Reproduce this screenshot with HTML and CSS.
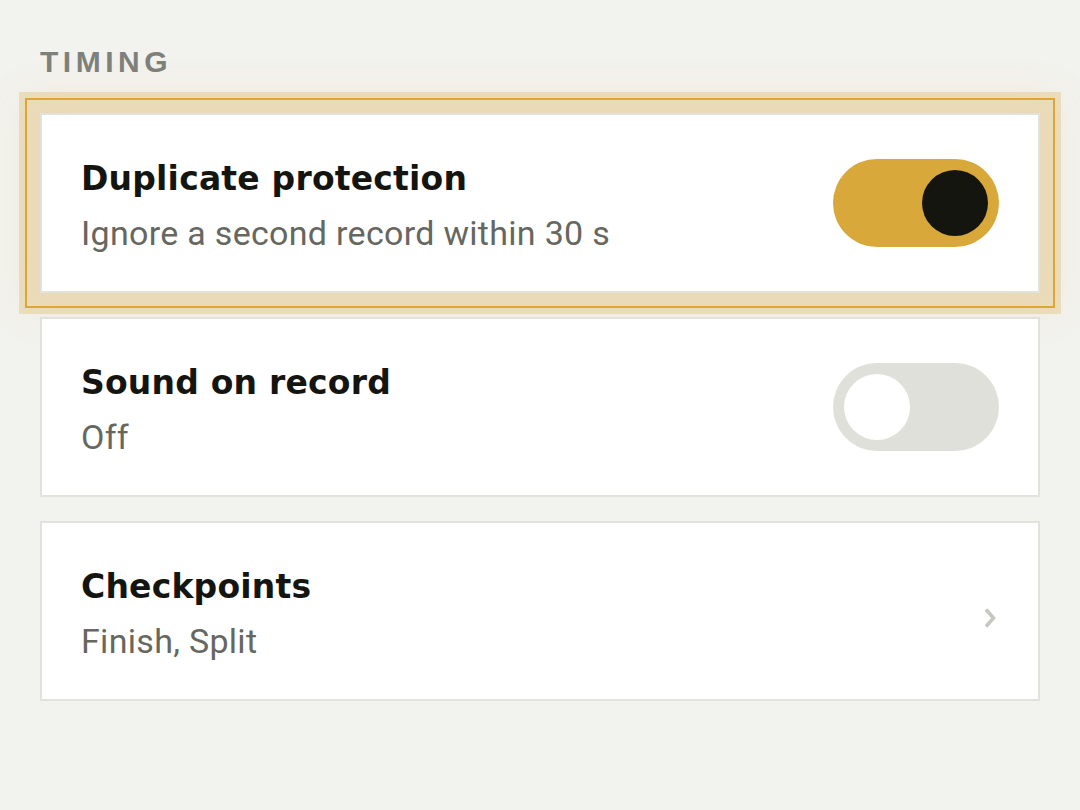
FILE: index.html
```html
<!DOCTYPE html>
<html lang="en">
<head>
    <meta charset="UTF-8">
    <meta name="viewport" content="width=device-width, initial-scale=1.0">
    <title>Timing settings</title>
    <link rel="stylesheet" href="styles.css">
</head>
<body>
    <div class="settings">
        <h2 class="section-label">TIMING</h2>

        <div class="setting-list">
            <div class="setting-row focused">
                <div class="setting-text">
                    <div class="setting-title">Duplicate protection</div>
                    <div class="setting-sub">Ignore a second record within 30 s</div>
                </div>
                <div class="toggle on"><span class="knob"></span></div>
            </div>

            <div class="setting-row">
                <div class="setting-text">
                    <div class="setting-title">Sound on record</div>
                    <div class="setting-sub">Off</div>
                </div>
                <div class="toggle"><span class="knob"></span></div>
            </div>

            <div class="setting-row">
                <div class="setting-text">
                    <div class="setting-title">Checkpoints</div>
                    <div class="setting-sub">Finish, Split</div>
                </div>
                <svg class="chevron" width="14" height="22" viewBox="0 0 14 22">
                    <path d="M3 2.5 L10.5 11 L3 19.5" fill="none" stroke="#c7c7c1" stroke-width="3.6" stroke-linecap="butt" stroke-linejoin="miter"/>
                </svg>
            </div>
        </div>
    </div>
</body>
</html>
```

FILE: styles.css
```css
body {
    margin: 0;
    background-color: #f2f2ee;
    font-family: 'DejaVu Sans', 'Liberation Sans', sans-serif;
    color: #141510;
}

.settings {
    padding: 45px 40px 0 40px;
}

.section-label {
    margin: 0 0 33px 0;
    font-family: 'Liberation Sans', sans-serif;
    font-size: 30px;
    line-height: 1.15;
    font-weight: bold;
    letter-spacing: 4.5px;
    color: #7e817b;
}

.setting-list {
    display: flex;
    flex-direction: column;
    gap: 24px;
}

.setting-row {
    box-sizing: border-box;
    height: 180px;
    display: flex;
    align-items: center;
    justify-content: space-between;
    padding: 0 39px;
    background-color: #ffffff;
    border: 2px solid #e2e2dc;
}

.setting-row.focused {
    outline: 2px solid #dba73a;
    outline-offset: 13px;
    box-shadow: 0 0 0 21px rgba(217, 168, 59, 0.26), 0 0 40px 20px rgba(217, 168, 59, 0.08);
}

.setting-text {
    padding-top: 6px;
}

.setting-title {
    font-family: 'DejaVu Sans', sans-serif;
    font-size: 33px;
    font-weight: bold;
    line-height: 40px;
    letter-spacing: 0.2px;
    color: #141510;
}

.setting-sub {
    margin-top: 14px;
    font-family: 'Roboto', 'Liberation Sans', sans-serif;
    font-size: 34px;
    line-height: 40px;
    letter-spacing: 0.3px;
    color: #66675f;
}

.toggle {
    width: 166px;
    height: 88px;
    border-radius: 44px;
    background-color: #e0e0da;
    display: flex;
    align-items: center;
    padding: 0 11px;
    box-sizing: border-box;
}

.toggle .knob {
    width: 66px;
    height: 66px;
    border-radius: 50%;
    background-color: #ffffff;
}

.toggle.on {
    background-color: #d9a83b;
    justify-content: flex-end;
}

.toggle.on .knob {
    background-color: #14150f;
}

.chevron {
    margin-top: 14px;
    margin-right: 2px;
}
```
